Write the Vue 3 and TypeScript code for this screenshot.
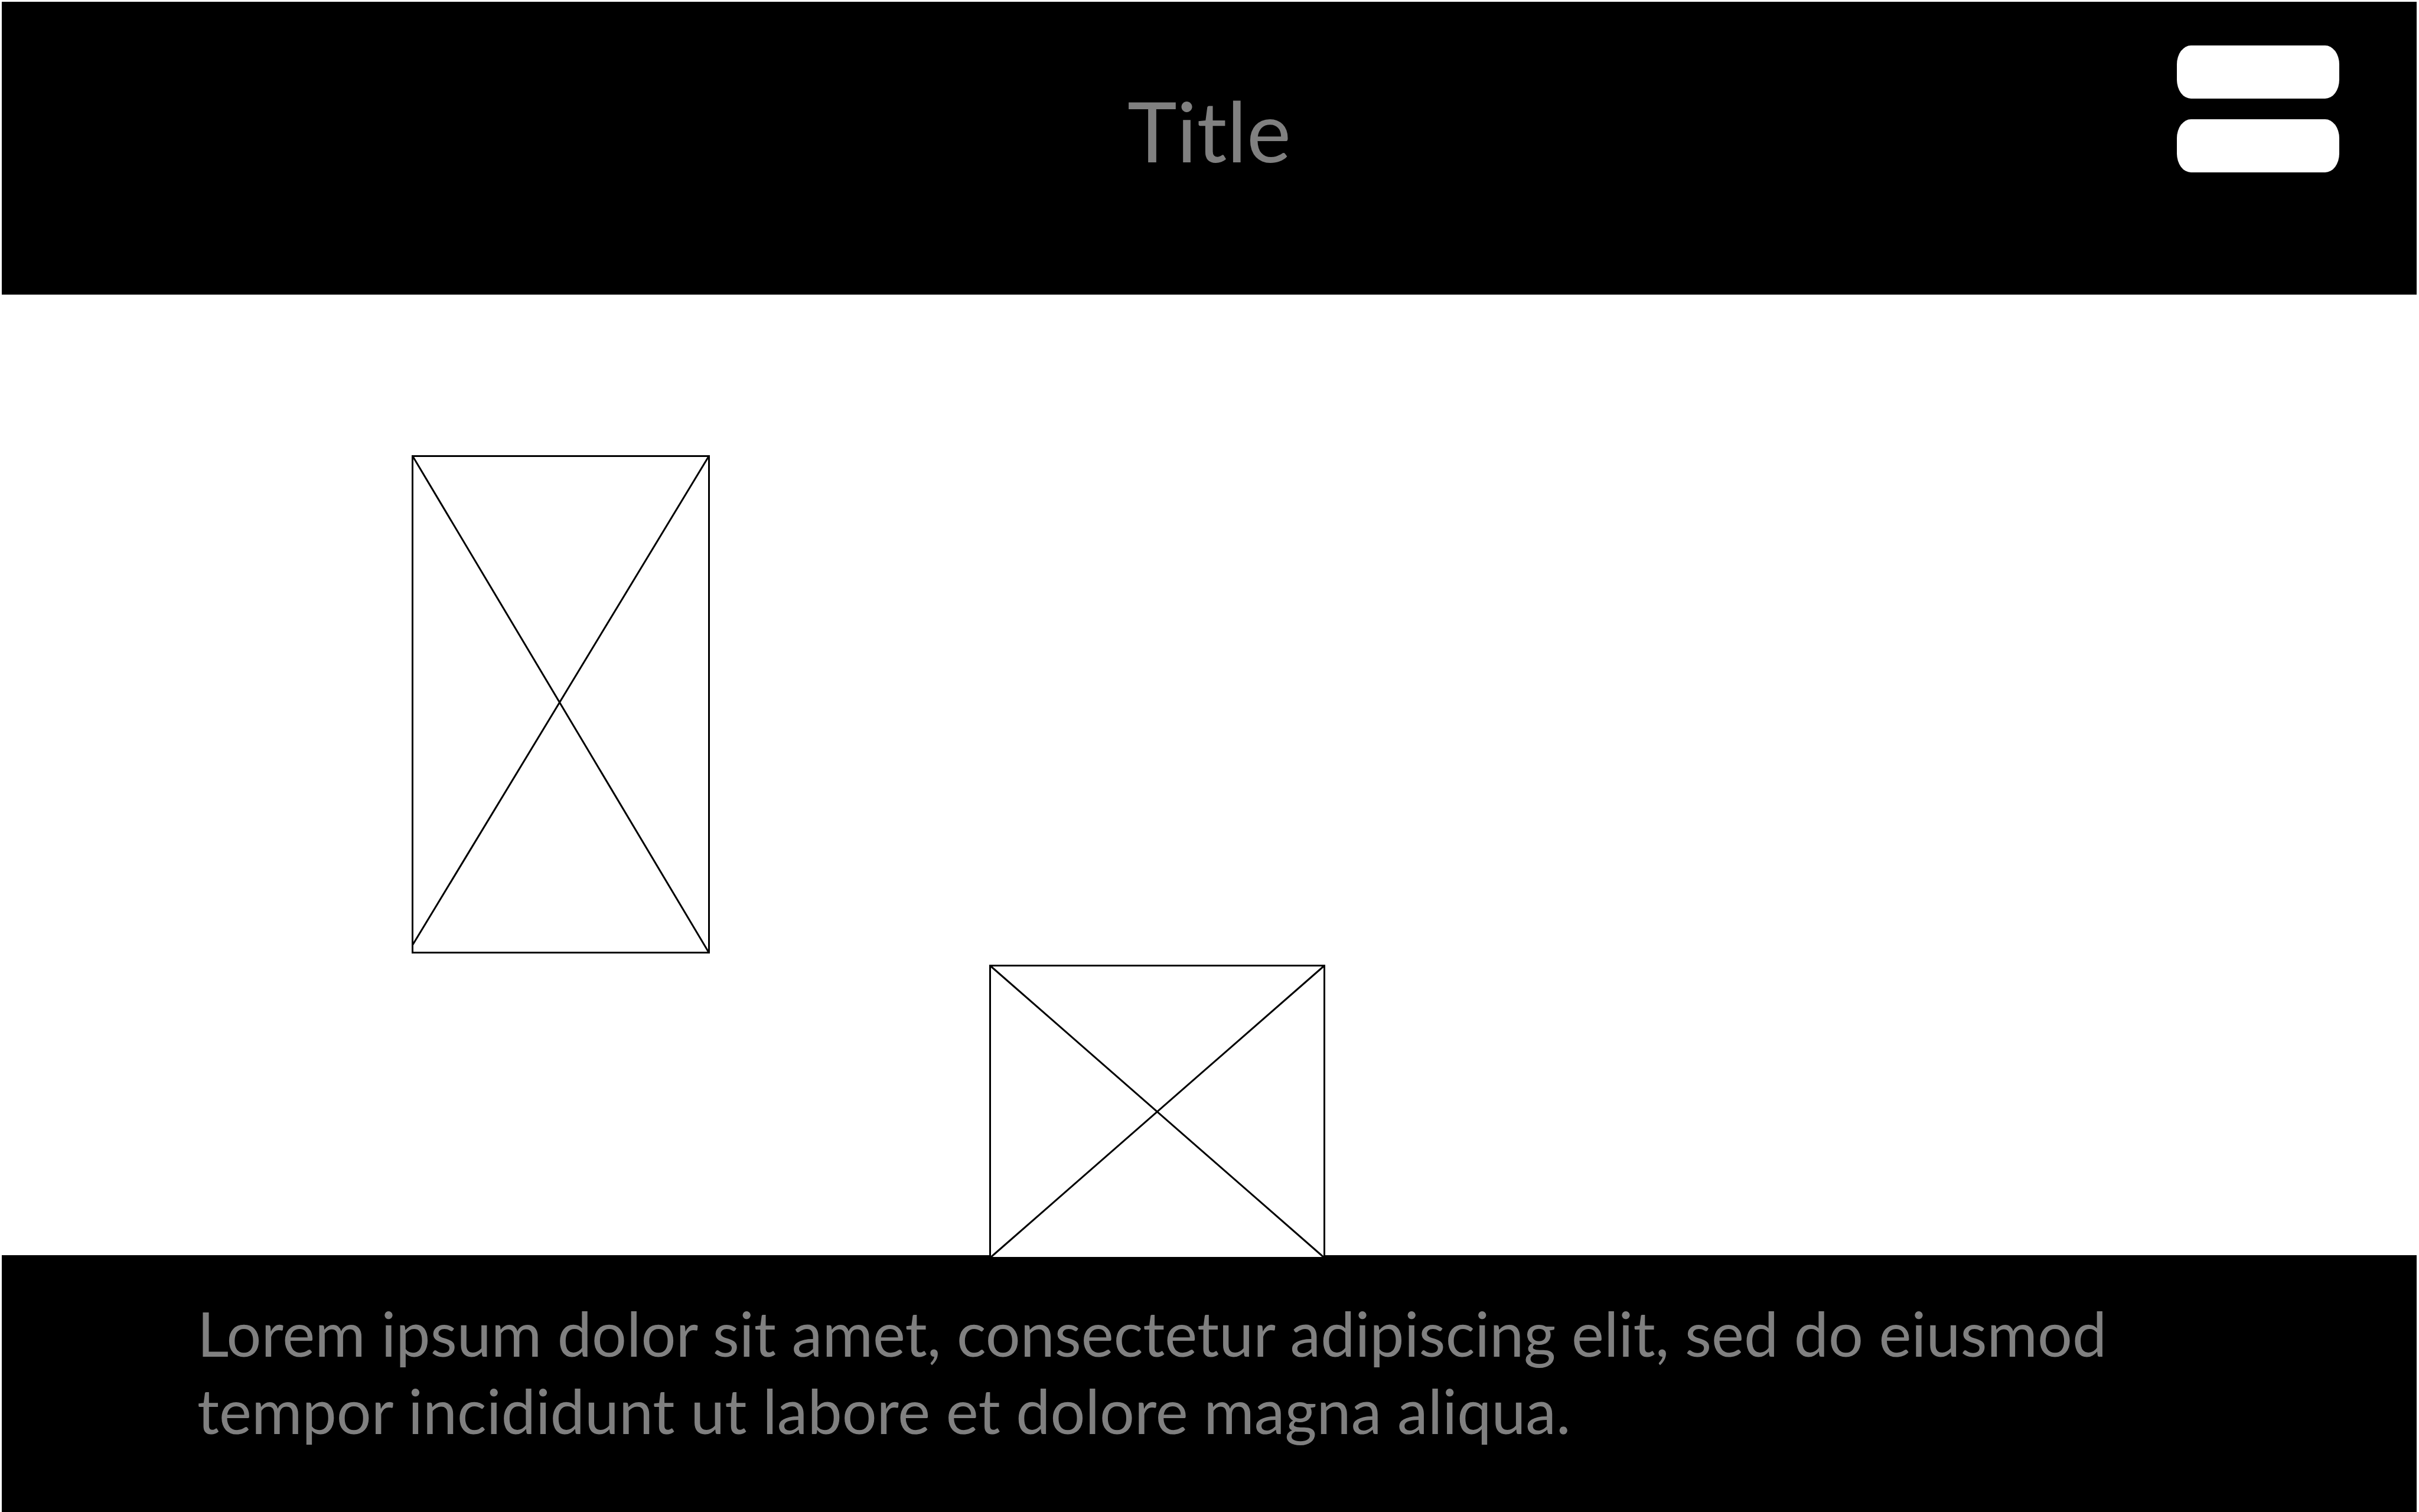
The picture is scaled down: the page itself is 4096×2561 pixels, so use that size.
<script setup lang="ts">
interface Placeholder {
  id: string
  label: string
  width: number
  height: number
  /* where the rising diagonal meets the left edge */
  riseFrom: number
}

const title: string = 'Title'
const blurb: string[] = [
  'Lorem ipsum dolor sit amet, consectetur adipiscing elit, sed do eiusmod',
  'tempor incididunt ut labore et dolore magna aliqua.',
]

const placeholders: Placeholder[] = [
  { id: 'tall', label: 'Tall image placeholder', width: 505, height: 844, riseFrom: 829 },
  { id: 'wide', label: 'Wide image placeholder', width: 569, height: 498, riseFrom: 496 },
]
</script>

<template>
  <div class="page">
    <header class="top">
      <h1 class="title">{{ title }}</h1>
      <button class="menu" type="button" aria-label="Menu">
        <span class="bar"></span>
        <span class="bar"></span>
      </button>
    </header>

    <main class="stage">
      <svg
        v-for="p in placeholders"
        :key="p.id"
        class="box"
        :class="p.id"
        :width="p.width"
        :height="p.height"
        :viewBox="`0 0 ${p.width} ${p.height}`"
        role="img"
        :aria-label="p.label"
      >
        <rect x="1.5" y="1.5" :width="p.width - 3" :height="p.height - 3" />
        <path :d="`M2 2L${p.width - 2} ${p.height - 2}M${p.width - 2} 2L2 ${p.riseFrom}`" />
      </svg>
    </main>

    <footer class="bottom">
      <p class="blurb">
        <template v-for="(line, i) in blurb" :key="i"><br v-if="i > 0" />{{ line }}</template>
      </p>
    </footer>
  </div>
</template>

<style>
body {
  margin: 0;
  background: #fff;
}
</style>

<style scoped>
.page {
  box-sizing: border-box;
  min-height: 100vh;
  padding: 3px 4px 0 3px;
  display: flex;
  flex-direction: column;
  font-family: Lato, "Open Sans", sans-serif;
  color: #808080;
}

.top {
  box-sizing: border-box;
  height: 496px;
  padding: 74px 131px 0;
  display: grid;
  grid-template-columns: 1fr auto 1fr;
  align-items: start;
  background: #000;
}

.title {
  grid-column: 2;
  margin: 43px 0 0;
  font-size: 142px;
  line-height: 200px;
  font-weight: 400;
}

.menu {
  justify-self: end;
  display: flex;
  flex-direction: column;
  gap: 35px;
  padding: 0;
  border: 0;
  background: none;
  cursor: pointer;
}

.bar {
  width: 275px;
  height: 90px;
  border-radius: 24px / 32px;
  background: #fff;
}

.stage {
  position: relative;
  z-index: 1;
  flex: 1;
  display: flex;
  align-items: flex-start;
  gap: 473px;
  padding-left: 694px;
}

.box {
  display: block;
  flex: none;
  fill: #fff;
  stroke: #000;
  stroke-width: 3px;
}

.box path {
  fill: none;
}

.tall {
  margin-top: 272px;
}

.wide {
  align-self: flex-end;
  margin-bottom: -6px;
}

.bottom {
  box-sizing: border-box;
  min-height: 435px;
  padding: 66px 331px 0;
  background: #000;
}

.blurb {
  margin: 0;
  font-size: 104px;
  line-height: 131px;
  white-space: nowrap;
}
</style>
